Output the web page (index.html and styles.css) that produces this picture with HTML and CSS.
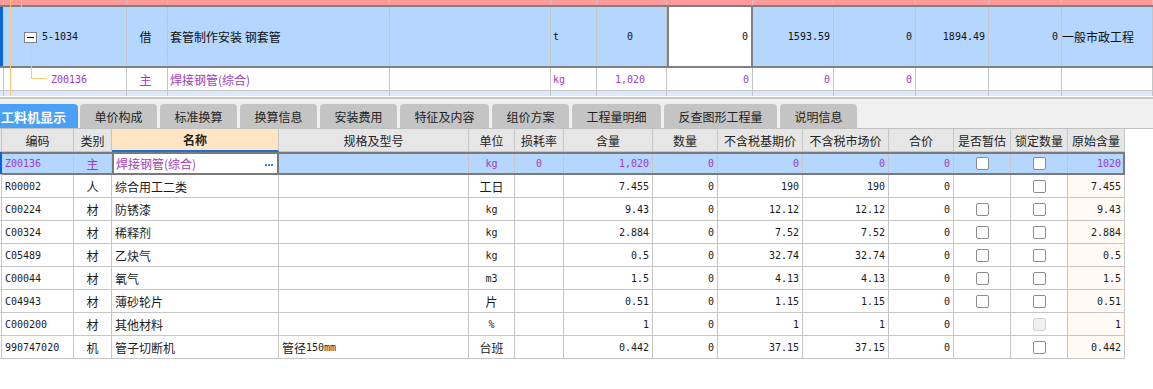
FILE: index.html
```html
<!DOCTYPE html>
<html lang="zh-CN">

<head>
  <meta charset="UTF-8">
  <title>工料机显示</title>
  <link rel="stylesheet" href="styles.css">
</head>

<body>
  <!-- 上方：定额列表 -->
  <div class="top">
    <svg class="tree" width="60" height="96">
      <line x1="10.5" y1="0" x2="10.5" y2="96" />
      <line x1="21.5" y1="0" x2="21.5" y2="30" />
      <line x1="31.5" y1="43" x2="31.5" y2="78.5" />
      <line x1="31" y1="78.5" x2="47" y2="78.5" />
      <rect x="24.5" y="32.5" width="12" height="10" fill="#fff" stroke="#808080" />
      <line x1="27" y1="37.5" x2="34" y2="37.5" style="stroke:#000" />
    </svg>
    <div class="trow strip">
      <div></div><div></div><div></div><div></div><div></div><div></div><div></div>
      <div></div><div></div><div></div><div></div><div></div><div></div>
    </div>
    <div class="trow main">
      <div class="bar"></div>
      <div class="code n">5-1034</div>
      <div class="c">借</div>
      <div class="pl">套管制作安装 钢套管</div>
      <div></div>
      <div class="n pl">t</div>
      <div class="n c">0</div>
      <div class="n r cur">0</div>
      <div class="n r">1593.59</div>
      <div class="n r">0</div>
      <div class="n r">1894.49</div>
      <div class="n r">0</div>
      <div>一般市政工程</div>
    </div>
    <div class="trow sub">
      <div></div>
      <div class="code2 n">Z00136</div>
      <div class="c">主</div>
      <div class="pl">焊接钢管(综合)</div>
      <div></div>
      <div class="n pl">kg</div>
      <div class="n c">1,020</div>
      <div class="n r">0</div>
      <div class="n r">0</div>
      <div class="n r">0</div>
      <div></div>
      <div></div>
      <div></div>
    </div>
    <div class="trow next">
      <div></div><div></div><div></div><div></div><div></div><div></div><div></div>
      <div></div><div></div><div></div><div></div><div></div><div></div>
    </div>
  </div>

  <!-- 页签 -->
  <div class="tabs">
    <div class="tab on">工料机显示</div>
    <div class="tab first">单价构成</div>
    <div class="tab">标准换算</div>
    <div class="tab">换算信息</div>
    <div class="tab">安装费用</div>
    <div class="tab w5">特征及内容</div>
    <div class="tab">组价方案</div>
    <div class="tab w5">工程量明细</div>
    <div class="tab w7">反查图形工程量</div>
    <div class="tab">说明信息</div>
  </div>

  <!-- 工料机表格 -->
  <div class="grid">
    <div class="row head">
      <div></div>
      <div>编码</div>
      <div>类别</div>
      <div class="hl">名称</div>
      <div>规格及型号</div>
      <div>单位</div>
      <div>损耗率</div>
      <div>含量</div>
      <div>数量</div>
      <div>不含税基期价</div>
      <div>不含税市场价</div>
      <div>合价</div>
      <div>是否暂估</div>
      <div>锁定数量</div>
      <div>原始含量</div>
    </div>

    <div class="row sel">
      <div></div>
      <div class="n">Z00136</div>
      <div class="c">主</div>
      <div class="edit">焊接钢管(综合)<span class="dots"></span></div>
      <div></div>
      <div class="n c">kg</div>
      <div class="n c">0</div>
      <div class="n r">1,020</div>
      <div class="n r">0</div>
      <div class="n r">0</div>
      <div class="n r">0</div>
      <div class="n r">0</div>
      <div class="c"><span class="cb"></span></div>
      <div class="c"><span class="cb"></span></div>
      <div class="n r orig">1020</div>
    </div>

    <div class="row">
      <div></div>
      <div class="n">R00002</div>
      <div class="c">人</div>
      <div>综合用工二类</div>
      <div></div>
      <div class="c">工日</div>
      <div></div>
      <div class="n r">7.455</div>
      <div class="n r">0</div>
      <div class="n r">190</div>
      <div class="n r">190</div>
      <div class="n r">0</div>
      <div></div>
      <div class="c"><span class="cb"></span></div>
      <div class="n r orig">7.455</div>
    </div>

    <div class="row">
      <div></div>
      <div class="n">C00224</div>
      <div class="c">材</div>
      <div>防锈漆</div>
      <div></div>
      <div class="n c">kg</div>
      <div></div>
      <div class="n r">9.43</div>
      <div class="n r">0</div>
      <div class="n r">12.12</div>
      <div class="n r">12.12</div>
      <div class="n r">0</div>
      <div class="c"><span class="cb"></span></div>
      <div class="c"><span class="cb"></span></div>
      <div class="n r orig">9.43</div>
    </div>

    <div class="row">
      <div></div>
      <div class="n">C00324</div>
      <div class="c">材</div>
      <div>稀释剂</div>
      <div></div>
      <div class="n c">kg</div>
      <div></div>
      <div class="n r">2.884</div>
      <div class="n r">0</div>
      <div class="n r">7.52</div>
      <div class="n r">7.52</div>
      <div class="n r">0</div>
      <div class="c"><span class="cb"></span></div>
      <div class="c"><span class="cb"></span></div>
      <div class="n r orig">2.884</div>
    </div>

    <div class="row">
      <div></div>
      <div class="n">C05489</div>
      <div class="c">材</div>
      <div>乙炔气</div>
      <div></div>
      <div class="n c">kg</div>
      <div></div>
      <div class="n r">0.5</div>
      <div class="n r">0</div>
      <div class="n r">32.74</div>
      <div class="n r">32.74</div>
      <div class="n r">0</div>
      <div class="c"><span class="cb"></span></div>
      <div class="c"><span class="cb"></span></div>
      <div class="n r orig">0.5</div>
    </div>

    <div class="row">
      <div></div>
      <div class="n">C00044</div>
      <div class="c">材</div>
      <div>氧气</div>
      <div></div>
      <div class="n c">m3</div>
      <div></div>
      <div class="n r">1.5</div>
      <div class="n r">0</div>
      <div class="n r">4.13</div>
      <div class="n r">4.13</div>
      <div class="n r">0</div>
      <div class="c"><span class="cb"></span></div>
      <div class="c"><span class="cb"></span></div>
      <div class="n r orig">1.5</div>
    </div>

    <div class="row">
      <div></div>
      <div class="n">C04943</div>
      <div class="c">材</div>
      <div>薄砂轮片</div>
      <div></div>
      <div class="c">片</div>
      <div></div>
      <div class="n r">0.51</div>
      <div class="n r">0</div>
      <div class="n r">1.15</div>
      <div class="n r">1.15</div>
      <div class="n r">0</div>
      <div class="c"><span class="cb"></span></div>
      <div class="c"><span class="cb"></span></div>
      <div class="n r orig">0.51</div>
    </div>

    <div class="row">
      <div></div>
      <div class="n">C000200</div>
      <div class="c">材</div>
      <div>其他材料</div>
      <div></div>
      <div class="n c">%</div>
      <div></div>
      <div class="n r">1</div>
      <div class="n r">0</div>
      <div class="n r">1</div>
      <div class="n r">1</div>
      <div class="n r">0</div>
      <div></div>
      <div class="c"><span class="cb off"></span></div>
      <div class="n r orig">1</div>
    </div>

    <div class="row">
      <div></div>
      <div class="n">990747020</div>
      <div class="c">机</div>
      <div>管子切断机</div>
      <div>管径<span class="n">150mm</span></div>
      <div class="c">台班</div>
      <div></div>
      <div class="n r">0.442</div>
      <div class="n r">0</div>
      <div class="n r">37.15</div>
      <div class="n r">37.15</div>
      <div class="n r">0</div>
      <div></div>
      <div class="c"><span class="cb"></span></div>
      <div class="n r orig">0.442</div>
    </div>
  </div>
</body>

</html>
```

FILE: styles.css
```css
* {
  box-sizing: border-box;
}

body {
  margin: 0;
  background-color: #fff;
  font-family: "Noto Sans CJK SC", sans-serif;
  font-size: 12px;
  color: #1a1a1a;
}

.n {
  font-family: "DejaVu Sans Mono", monospace;
  font-size: 10px;
}

.c {
  justify-content: center;
}

.r {
  justify-content: flex-end;
}

/* 上方定额 */
.top {
  position: relative;
  height: 99px;
  padding-bottom: 1px;
  border-bottom: 2px solid #c8c8c8;
}

.tree {
  position: absolute;
  top: 0;
  left: 0;
}

.tree line {
  stroke: #ffc774;
  stroke-width: 1;
}

.trow {
  display: grid;
  grid-template-columns: 2px 125px 41px 222px 161px 46px 70px 86px 81px 82px 73px 73px 1fr;
}

.trow > div {
  display: flex;
  align-items: center;
  border-right: 1px solid #c4c4c4;
  white-space: nowrap;
  overflow: hidden;
  padding-right: 3px;
}

.trow .pl {
  padding-left: 2px;
}

.strip {
  height: 7px;
  background-color: #ff9a9a;
  border-bottom: 2px solid #808080;
}

.strip > div {
  border-right-color: #e8b6b6;
}

.main {
  height: 61px;
  background-color: #b4d6ff;
  border-bottom: 2px solid #808080;
  color: #111;
}

.main .bar {
  background-color: #0c64d8;
  border-right: none;
}

.main .code {
  padding-left: 40px;
}

.main .cur {
  background-color: #fff;
  border-left: 2px solid #808080;
  border-right: 2px solid #808080;
}

.sub {
  height: 23px;
  border-bottom: 1px solid #c8c8c8;
  color: #a03cc0;
}

.sub .code2 {
  padding-left: 49px;
}

.next {
  height: 5px;
  background-color: #dde9f8;
}

/* 页签 */
.tabs {
  display: flex;
  align-items: flex-end;
  height: 30px;
  background-color: #f0f0f0;
  border-bottom: 1px solid #c0c0c0;
}

.tab {
  display: flex;
  align-items: center;
  justify-content: center;
  width: 77px;
  height: 24px;
  margin-left: 3px;
  background-color: #c4c4c4;
  border-radius: 4px 4px 0 0;
  color: #222;
}

.tab.on {
  width: 78px;
  margin-left: 0;
  padding-left: 1px;
  justify-content: flex-start;
  background-color: #4aa0f5;
  border-radius: 0 4px 0 0;
  color: #fff;
  font-size: 13px;
  font-weight: bold;
}

.tab.first {
  margin-left: 2px;
}

.tab.w5 {
  width: 89px;
}

.tab.w7 {
  width: 113px;
}

/* 工料机表格 */
.grid {
  width: 1125px;
}

.row {
  display: grid;
  grid-template-columns: 2px 72px 38px 167px 190px 46px 49px 89px 65px 85px 86px 65px 57px 57px 57px;
  height: 23px;
}

.row > div {
  display: flex;
  align-items: center;
  padding: 0 3px;
  border-right: 1px solid #c6c6c6;
  border-bottom: 1px solid #c6c6c6;
  white-space: nowrap;
  overflow: hidden;
}

.row > div:first-child {
  padding: 0;
}

.head > div {
  justify-content: center;
  background-color: #e6e6e6;
  color: #222;
}

.head .hl {
  background-color: #ffe5c4;
  border-bottom: 2px solid #1d6fd8;
  font-weight: bold;
}

.row .orig {
  background-color: #fffaf3;
}

.row.sel {
  position: relative;
  background-color: #b4d6ff;
  color: #a03cc0;
}

.row.sel::after {
  content: '';
  position: absolute;
  top: 0;
  right: 0;
  bottom: 0;
  left: 2px;
  border: 2px solid #7a7a7a;
  border-left: none;
  pointer-events: none;
}

.row.sel > div:first-child {
  background-color: #0c64d8;
  border-right: none;
}

.row.sel .orig {
  background-color: transparent;
}

.row.sel .edit {
  justify-content: space-between;
  background-color: #fff;
  border: 2px solid #7a7a7a;
  padding-left: 2px;
  padding-right: 4px;
}

.dots {
  width: 8px;
  height: 2px;
  margin-top: 2px;
  background: repeating-linear-gradient(to right, #3b7fd0 0 2px, transparent 2px 3px);
}

.cb {
  width: 13px;
  height: 13px;
  background-color: #fff;
  border: 1px solid #8c8c8c;
  border-radius: 2px;
}

.cb.off {
  background-color: #f0f0f0;
  border-color: #d2d2d2;
}
```
